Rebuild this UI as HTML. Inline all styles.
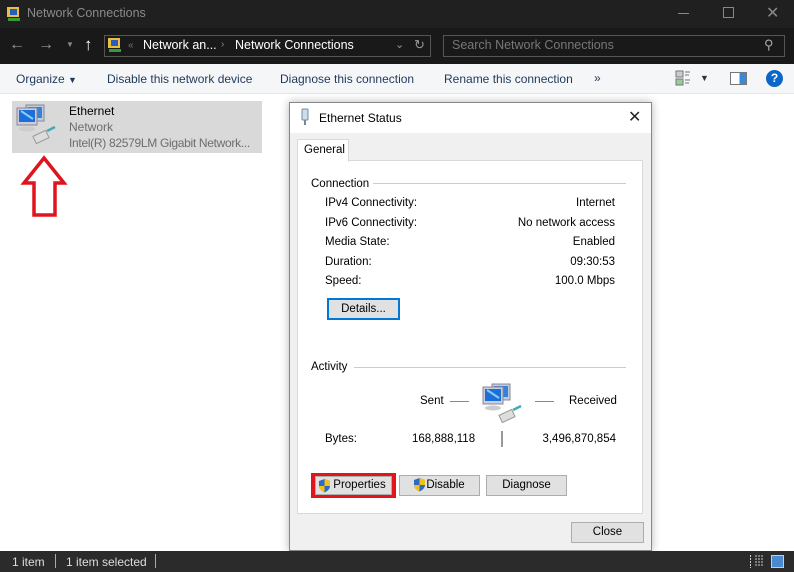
<!DOCTYPE html>
<html><head><meta charset="utf-8"><style>
*{margin:0;padding:0;box-sizing:border-box}
body{width:794px;height:572px;overflow:hidden;background:#fff;font-family:"Liberation Sans",sans-serif;font-size:12px;position:relative;color:#000}
.a{position:absolute;white-space:nowrap}
.btn{position:absolute;background:#e1e1e1;border:1px solid #adadad;text-align:center;font-size:11.5px;line-height:19px}
</style></head><body>
<div class="a" style="left:0;top:0;width:794px;height:28px;background:#202020"></div>
<svg class="a" style="left:6px;top:6px" width="16" height="16"><rect x="1" y="1" width="12" height="10" fill="#e8c040"/><rect x="4" y="3" width="7" height="6" fill="#2a5cc0"/><rect x="2" y="12" width="12" height="3" fill="#3a9a3a"/></svg>
<div class="a" style="left:27px;top:6px;color:#8a8a8a;font-size:12.5px">Network Connections</div>
<div class="a" style="left:678px;top:13px;width:11px;height:1px;background:#888"></div>
<div class="a" style="left:723px;top:7px;width:11px;height:11px;border:1px solid #888"></div>
<div class="a" style="left:766px;top:3px;color:#888;font-size:16px">✕</div>
<div class="a" style="left:0;top:28px;width:794px;height:36px;background:#191919"></div>
<div class="a" style="left:9px;top:36px;color:#999;font-size:16px">←</div>
<div class="a" style="left:38px;top:36px;color:#999;font-size:16px">→</div>
<div class="a" style="left:66px;top:40px;color:#888;font-size:8px">▼</div>
<div class="a" style="left:84px;top:35px;color:#fff;font-size:17px;font-weight:bold">↑</div>
<div class="a" style="left:104px;top:35px;width:327px;height:22px;border:1px solid #555"></div>
<svg class="a" style="left:107px;top:37px" width="16" height="16"><rect x="1" y="1" width="12" height="10" fill="#e8c040"/><rect x="4" y="3" width="7" height="6" fill="#2a5cc0"/><rect x="2" y="12" width="12" height="3" fill="#3a9a3a"/></svg>
<div class="a" style="left:128px;top:40px;color:#777;font-size:10px">«</div>
<div class="a" style="left:143px;top:38px;color:#fff;font-size:12.5px">Network an...</div>
<div class="a" style="left:221px;top:39px;color:#888;font-size:10px">›</div>
<div class="a" style="left:235px;top:38px;color:#fff;font-size:12.5px">Network Connections</div>
<div class="a" style="left:395px;top:38px;color:#999;font-size:11px">⌄</div>
<div class="a" style="left:414px;top:37px;color:#999;font-size:13px">↻</div>
<div class="a" style="left:443px;top:35px;width:342px;height:22px;border:1px solid #555"></div>
<div class="a" style="left:452px;top:38px;color:#777;font-size:12.5px">Search Network Connections</div>
<div class="a" style="left:764px;top:37px;color:#aaa;font-size:13px">⚲</div>
<div class="a" style="left:0;top:64px;width:794px;height:30px;background:#f5f6f7;border-bottom:1px solid #e5e5e5"></div>
<div class="a" style="left:16px;top:72px;color:#1e395b;font-size:12px">Organize <span style="font-size:9px">▼</span></div>
<div class="a" style="left:107px;top:72px;color:#1e395b;font-size:12px">Disable this network device</div>
<div class="a" style="left:280px;top:72px;color:#1e395b;font-size:12px">Diagnose this connection</div>
<div class="a" style="left:444px;top:72px;color:#1e395b;font-size:12px">Rename this connection</div>
<div class="a" style="left:594px;top:71px;color:#1e395b;font-size:12px">»</div>
<svg class="a" style="left:675px;top:70px" width="16" height="16"><rect x="1" y="1" width="7" height="6" fill="#ccc" stroke="#777"/><rect x="1" y="9" width="7" height="6" fill="#9c9" stroke="#777"/><path d="M10 2h5M10 5h4M10 10h5M10 13h4" stroke="#777"/></svg>
<div class="a" style="left:700px;top:73px;color:#333;font-size:9px">▼</div>
<div class="a" style="left:730px;top:72px;width:17px;height:13px;border:1px solid #777;background:linear-gradient(90deg,#fff 55%,#3a8ad8 55%)"></div>
<div class="a" style="left:766px;top:70px;width:17px;height:17px;border-radius:50%;background:#0a66c8;color:#fff;font-weight:bold;text-align:center;line-height:17px;font-size:12px">?</div>
<div class="a" style="left:12px;top:101px;width:250px;height:52px;background:#d9d9d9"></div>
<svg class="a" style="left:14px;top:101px" width="50" height="50" viewBox="0 0 50 50"><g id="net"><rect x="12" y="4" width="18" height="16" fill="#bcd" stroke="#889"/><rect x="14" y="6" width="14" height="11" fill="#3a7fd8"/><rect x="3" y="7" width="20" height="17" fill="#ccd" stroke="#889"/><rect x="5" y="9" width="16" height="12" fill="#1d6fd8"/><path d="M7 10l12 8" stroke="#8cf" stroke-width="2"/><ellipse cx="13" cy="28" rx="8" ry="2.5" fill="#ccc"/><rect x="20" y="32" width="14" height="8" fill="#ddd" stroke="#999" transform="rotate(-25 27 36)"/><path d="M33 30l8-4" stroke="#4ab" stroke-width="2.5"/></g></svg>
<div class="a" style="left:69px;top:104px;font-size:12px">Ethernet</div>
<div class="a" style="left:69px;top:120px;font-size:12px;color:#6d6d6d">Network</div>
<div class="a" style="left:69px;top:136px;font-size:12px;letter-spacing:-0.3px;color:#6d6d6d">Intel(R) 82579LM Gigabit Network...</div>
<svg class="a" style="left:20px;top:155px" width="50" height="65"><path d="M24 3L44 28H35V60H14V28H4Z" fill="none" stroke="#e0141e" stroke-width="3.5" stroke-linejoin="miter"/></svg>
<div class="a" style="left:289px;top:102px;width:363px;height:449px;background:#f0f0f0;border:1px solid #888;box-shadow:0 0 8px rgba(0,0,0,.3)"></div>
<div class="a" style="left:290px;top:103px;width:361px;height:30px;background:#fff"></div>
<svg class="a" style="left:300px;top:108px" width="10" height="18"><rect x="2" y="1" width="6" height="11" rx="1" fill="#cde" stroke="#789"/><rect x="4" y="12" width="2" height="5" fill="#789"/></svg>
<div class="a" style="left:319px;top:111px;font-size:12px">Ethernet Status</div>
<div class="a" style="left:628px;top:107px;font-size:16px;color:#222">✕</div>
<div class="a" style="left:297px;top:160px;width:346px;height:354px;background:#fff;border:1px solid #d9d9d9"></div>
<div class="a" style="left:297px;top:139px;width:52px;height:23px;background:#fff;border:1px solid #d9d9d9;border-bottom:none"></div>
<div class="a" style="left:304px;top:144px;font-size:11.5px">General</div>
<div class="a" style="left:311px;top:178px;font-size:11.5px">Connection</div>
<div class="a" style="left:373px;top:183px;width:253px;height:1px;background:#ccc"></div>
<div class="a" style="left:325px;top:197px;font-size:11.5px">IPv4 Connectivity:</div>
<div class="a" style="left:325px;top:217px;font-size:11.5px">IPv6 Connectivity:</div>
<div class="a" style="left:325px;top:236px;font-size:11.5px">Media State:</div>
<div class="a" style="left:325px;top:256px;font-size:11.5px">Duration:</div>
<div class="a" style="left:325px;top:275px;font-size:11.5px">Speed:</div>
<div class="a" style="right:179px;top:197px;font-size:11.5px">Internet</div>
<div class="a" style="right:179px;top:217px;font-size:11.5px">No network access</div>
<div class="a" style="right:179px;top:236px;font-size:11.5px">Enabled</div>
<div class="a" style="right:179px;top:256px;font-size:11.5px">09:30:53</div>
<div class="a" style="right:179px;top:275px;font-size:11.5px">100.0 Mbps</div>
<div class="btn" style="left:327px;top:298px;width:73px;height:22px;border:2px solid #0078d7;line-height:18px">Details...</div>
<div class="a" style="left:311px;top:361px;font-size:11.5px">Activity</div>
<div class="a" style="left:354px;top:367px;width:272px;height:1px;background:#ccc"></div>
<div class="a" style="left:420px;top:395px;font-size:11.5px">Sent</div>
<div class="a" style="left:450px;top:401px;width:19px;height:1px;background:#888"></div>
<div class="a" style="left:535px;top:401px;width:19px;height:1px;background:#888"></div>
<div class="a" style="left:569px;top:395px;font-size:11.5px">Received</div>
<svg class="a" style="left:480px;top:380px" width="50" height="50" viewBox="0 0 50 50"><use href="#net"/></svg>
<div class="a" style="left:501px;top:431px;width:2px;height:16px;background:#999"></div>
<div class="a" style="left:325px;top:433px;font-size:11.5px">Bytes:</div>
<div class="a" style="left:412px;top:433px;font-size:11.5px">168,888,118</div>
<div class="a" style="right:178px;top:433px;font-size:11.5px">3,496,870,854</div>
<div class="a" style="left:311px;top:473px;width:85px;height:25px;background:#e3141e"></div>
<div class="btn" style="left:315px;top:476px;width:77px;height:19px;line-height:17px;padding-left:12px">Properties</div>
<div class="btn" style="left:399px;top:475px;width:81px;height:21px;padding-left:12px">Disable</div>
<svg class="a" style="left:318px;top:478px" width="13" height="15"><path d="M6.5 1L12 3v5c0 3-3 5.5-5.5 6.5C4 13.5 1 11 1 8V3z" fill="#2a6bc8"/><path d="M6.5 1L12 3v5H6.5zM6.5 8V14.5C4 13.5 1 11 1 8z" fill="#f2c21a"/></svg>
<svg class="a" style="left:413px;top:477px" width="13" height="15"><path d="M6.5 1L12 3v5c0 3-3 5.5-5.5 6.5C4 13.5 1 11 1 8V3z" fill="#2a6bc8"/><path d="M6.5 1L12 3v5H6.5zM6.5 8V14.5C4 13.5 1 11 1 8z" fill="#f2c21a"/></svg>
<div class="btn" style="left:486px;top:475px;width:81px;height:21px">Diagnose</div>
<div class="btn" style="left:571px;top:522px;width:73px;height:21px">Close</div>
<div class="a" style="left:0;top:551px;width:794px;height:21px;background:#2b2b2b"></div>
<div class="a" style="left:12px;top:555px;color:#ddd;font-size:12px">1 item</div>
<div class="a" style="left:55px;top:554px;width:1px;height:14px;background:#aaa"></div>
<div class="a" style="left:66px;top:555px;color:#ddd;font-size:12px">1 item selected</div>
<div class="a" style="left:155px;top:554px;width:1px;height:14px;background:#aaa"></div>
<svg class="a" style="left:749px;top:554px" width="16" height="15"><path d="M1.5 1v13M6 2h8M6 5h8M6 8h8M6 11h8" stroke="#ccc" stroke-dasharray="2 1"/></svg>
<div class="a" style="left:771px;top:555px;width:13px;height:13px;border:1px solid #ccc;background:#4a8ad0"></div>
</body></html>
